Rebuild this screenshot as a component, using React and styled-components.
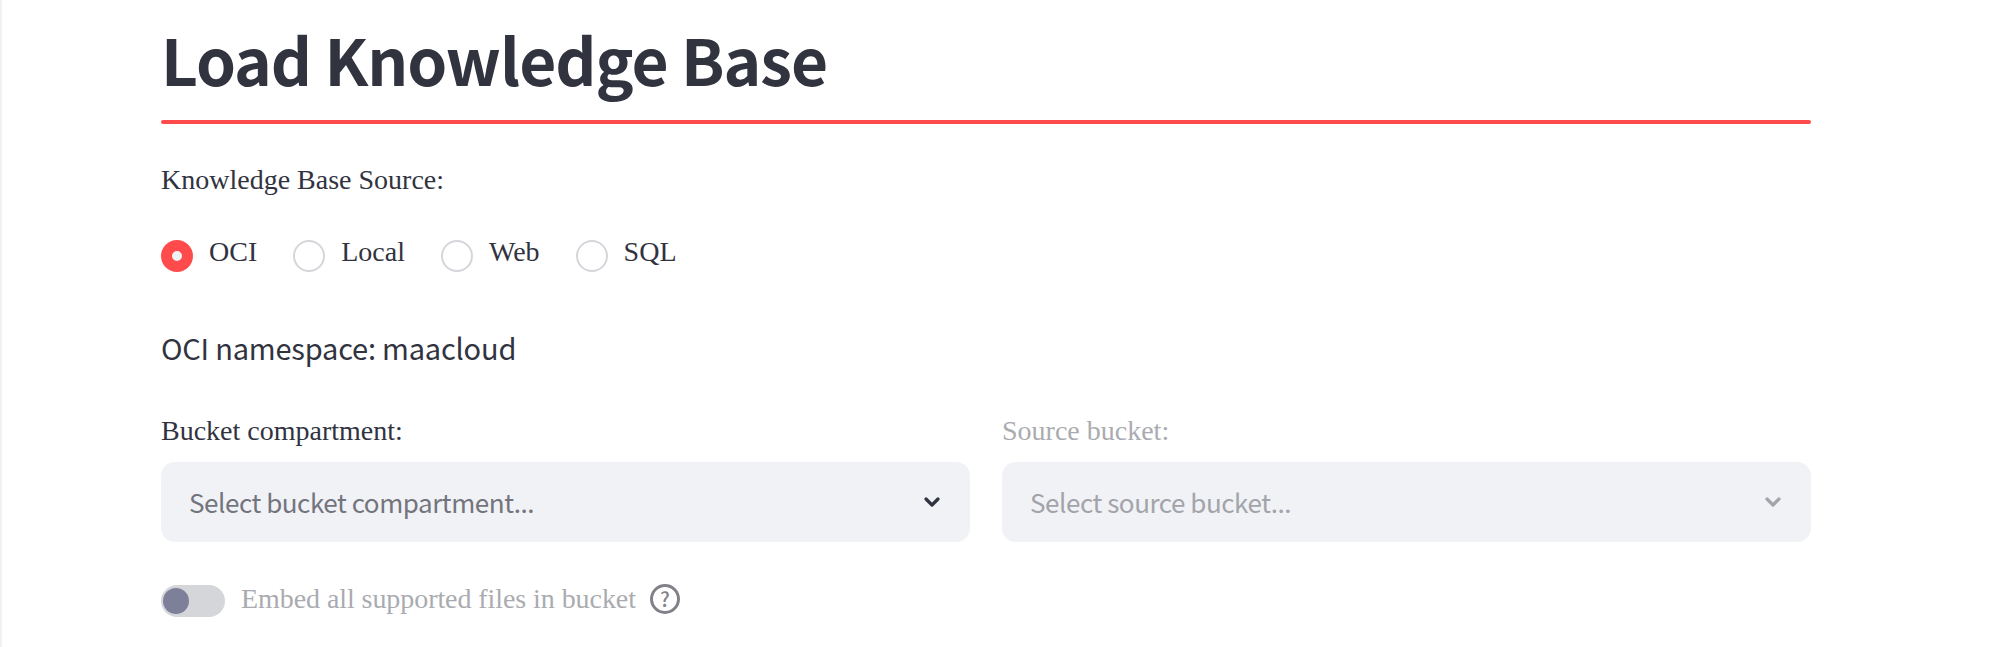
import React from "react";
import styled, { createGlobalStyle } from "styled-components";
import { ChevronDown } from "lucide-react";

const SANS = `"Noto Sans CJK SC", "Noto Sans", sans-serif`;
const SERIF = `"Liberation Serif", serif`;

const GlobalStyle = createGlobalStyle`
  html, body {
    margin: 0;
    background: #fff;
  }
`;

const sources = ["OCI", "Local", "Web", "SQL"];

function Radio({ label, checked }) {
  return (
    <RadioItem>
      <RadioCircle $checked={checked} />
      <RadioText>{label}</RadioText>
    </RadioItem>
  );
}

function SelectField({ label, placeholder, disabled }) {
  return (
    <Field>
      <FieldLabel $disabled={disabled}>{label}</FieldLabel>
      <SelectBox>
        <Placeholder $disabled={disabled}>{placeholder}</Placeholder>
        <ChevronDown
          size={24}
          strokeWidth={3.2}
          color={disabled ? "#a3a4aa" : "#31333f"}
        />
      </SelectBox>
    </Field>
  );
}

export default function App() {
  return (
    <Page>
      <GlobalStyle />
      <Content>
        <Title>Load Knowledge Base</Title>
        <RedLine />
        <SourceLabel>Knowledge Base Source:</SourceLabel>
        <RadioRow>
          {sources.map((s, i) => (
            <Radio key={s} label={s} checked={i === 0} />
          ))}
        </RadioRow>
        <Namespace>OCI namespace: maacloud</Namespace>
        <Columns>
          <SelectField
            label="Bucket compartment:"
            placeholder="Select bucket compartment..."
          />
          <SelectField
            label="Source bucket:"
            placeholder="Select source bucket..."
            disabled
          />
        </Columns>
        <ToggleRow>
          <Track>
            <Knob />
          </Track>
          <ToggleLabel>Embed all supported files in bucket</ToggleLabel>
          <HelpIcon>?</HelpIcon>
        </ToggleRow>
      </Content>
    </Page>
  );
}

const Page = styled.div`
  box-sizing: border-box;
  height: 647px;
  overflow: hidden;
  border-left: 2px solid #f0f2f6;
  padding-left: 159px;
`;

const Content = styled.div`
  width: 1650px;
  display: flex;
  flex-direction: column;
`;

const Title = styled.h1`
  margin: 0;
  padding-top: 18px;
  height: 99px;
  box-sizing: border-box;
  font-family: ${SANS};
  font-weight: 700;
  font-size: 64px;
  line-height: 80px;
  letter-spacing: -1.05px;
  color: #31333f;
  white-space: nowrap;
`;

const RedLine = styled.div`
  height: 4px;
  margin-top: 21px;
  border-radius: 2px;
  background: #ff4b4b;
`;

const SourceLabel = styled.div`
  margin-top: 38px;
  font-family: ${SERIF};
  font-size: 28px;
  line-height: 36px;
  color: #31333f;
`;

const RadioRow = styled.div`
  display: flex;
  margin-top: 36px;
  gap: 36px;
`;

const RadioItem = styled.div`
  display: flex;
  gap: 16px;
`;

const RadioCircle = styled.span`
  box-sizing: border-box;
  width: 32px;
  height: 32px;
  margin-top: 6px;
  border-radius: 50%;
  background: ${(p) => (p.$checked ? "#f0f2f6" : "#fff")};
  border: ${(p) => (p.$checked ? "11px solid #ff4b4b" : "2px solid #d5d6da")};
`;

const RadioText = styled.span`
  font-family: ${SERIF};
  font-size: 28px;
  line-height: 36px;
  color: #31333f;
`;

const Namespace = styled.div`
  margin-top: 55px;
  font-family: ${SANS};
  font-size: 29px;
  line-height: 40px;
  letter-spacing: -0.2px;
  color: #31333f;
`;

const Columns = styled.div`
  display: grid;
  grid-template-columns: 1fr 1fr;
  gap: 32px;
  margin-top: 46px;
`;

const Field = styled.div`
  display: flex;
  flex-direction: column;
  gap: 13px;
`;

const FieldLabel = styled.div`
  font-family: ${SERIF};
  font-size: 28px;
  line-height: 36px;
  color: ${(p) => (p.$disabled ? "#aaabb0" : "#31333f")};
`;

const SelectBox = styled.div`
  display: flex;
  align-items: center;
  justify-content: space-between;
  box-sizing: border-box;
  height: 80px;
  padding: 0 26px 0 28px;
  border-radius: 14px;
  background: #f0f2f6;
`;

const Placeholder = styled.span`
  padding-bottom: 2px;
  font-family: ${SANS};
  font-size: 26px;
  letter-spacing: -0.45px;
  color: ${(p) => (p.$disabled ? "#a3a4aa" : "#73747d")};
`;

const ToggleRow = styled.div`
  display: flex;
  align-items: center;
  margin-top: 38px;
`;

const Track = styled.div`
  display: flex;
  align-items: center;
  box-sizing: border-box;
  width: 64px;
  height: 32px;
  margin-top: 5px;
  padding-left: 2px;
  border-radius: 16px;
  background: #d5d6da;
`;

const Knob = styled.div`
  width: 26px;
  height: 26px;
  border-radius: 50%;
  background: #7e8099;
`;

const ToggleLabel = styled.span`
  margin-left: 16px;
  font-family: ${SERIF};
  font-size: 28px;
  line-height: 36px;
  letter-spacing: -0.07px;
  color: #aaabb0;
`;

const HelpIcon = styled.span`
  display: flex;
  align-items: center;
  justify-content: center;
  box-sizing: border-box;
  width: 30px;
  height: 30px;
  margin-left: 14px;
  border: 3px solid #808189;
  border-radius: 50%;
  font-family: ${SANS};
  font-size: 20px;
  font-weight: 500;
  color: #808189;
`;
